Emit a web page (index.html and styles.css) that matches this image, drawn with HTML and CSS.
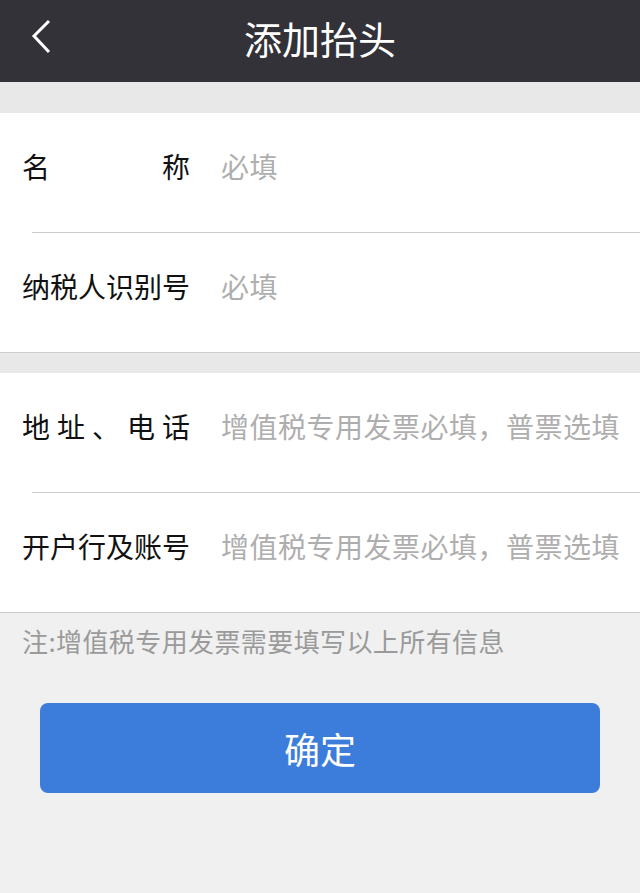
FILE: index.html
```html
<!DOCTYPE html>
<html>
  <head>
    <meta charset="utf-8"/>
    <title>添加抬头</title>
    <link rel="stylesheet" href="styles.css">
  </head>
  <body>

    <div class="topbar">
      <a class="topbar-back" href="#">
        <svg width="24" height="36" viewBox="0 0 24 36">
          <polyline points="19,2 4,17 19,33" fill="none" stroke="#fff" stroke-width="3"/>
        </svg>
      </a>
      <div class="topbar-title">添加抬头</div>
    </div>

    <form class="invoice-form">

      <div class="group">
        <div class="row">
          <label class="row-label justify" for="title-name">名称</label>
          <input id="title-name" class="row-input" type="text" placeholder="必填"/>
        </div>
        <div class="row">
          <label class="row-label" for="title-taxno">纳税人识别号</label>
          <input id="title-taxno" class="row-input" type="text" placeholder="必填"/>
        </div>
      </div>

      <div class="group">
        <div class="row">
          <label class="row-label justify" for="title-addr">地址、电话</label>
          <input id="title-addr" class="row-input" type="text" placeholder="增值税专用发票必填，普票选填"/>
        </div>
        <div class="row">
          <label class="row-label" for="title-bank">开户行及账号</label>
          <input id="title-bank" class="row-input" type="text" placeholder="增值税专用发票必填，普票选填"/>
        </div>
      </div>

      <p class="note">注:增值税专用发票需要填写以上所有信息</p>

      <div class="actions">
        <button class="btn-submit" type="button">确定</button>
      </div>

    </form>

  </body>
</html>
```

FILE: styles.css
```css
/* invoice title page, mobile width 640 */

body
{
margin: 0;
background-color: #F0F0F0;
font-family: "Noto Sans CJK SC", "Noto Sans", sans-serif;
color: #111111;
}

.topbar
{
display: flex;
align-items: center;
justify-content: center;
position: relative;
height: 82px;
background-color: #333238;
}

.topbar-back
{
position: absolute;
left: 30px;
top: 19px;
display: block;
}

.topbar-back svg
{
display: block;
}

.topbar-title
{
font-size: 38px;
line-height: 38px;
color: #FFFFFF;
margin-top: -6px;
}

.invoice-form
{
margin: 0;
padding-top: 31px;
background: linear-gradient(#E8E8E8, #E8E8E8) no-repeat 0 0 / 100% 31px;
}

.group
{
background-color: #FFFFFF;
border-bottom: 1px solid #CCCCCC;
}

.group + .group
{
border-top: 20px solid #E8E8E8;
}

.row
{
display: flex;
align-items: center;
height: 119px;
padding: 0 0 14px 22px;
box-sizing: border-box;
}

.row + .row
{
height: 120px;
border-top: 1px solid #CCCCCC;
margin-left: 32px;
padding-left: 0;
}

.row + .row .row-label
{
margin-left: -10px;
}

.row-label
{
flex: none;
width: 168px;
font-size: 28px;
line-height: 28px;
color: #111111;
}

.row-label.justify
{
text-align: justify;
text-align-last: justify;
}

.row-input
{
flex: 1;
min-width: 0;
margin-left: 31px;
padding: 0;
border: none;
outline: none;
background: transparent;
font-family: "Noto Sans CJK SC", "Noto Sans", sans-serif;
font-size: 28px;
line-height: 28px;
letter-spacing: 0.5px;
color: #111111;
}

.row-input::placeholder
{
color: #AEAEAE;
}

.note
{
margin: 0;
padding: 13px 22px 0;
font-size: 26px;
line-height: 30px;
letter-spacing: 0.4px;
color: #9A9A9A;
}

.actions
{
padding: 47px 40px 100px;
}

.btn-submit
{
display: block;
width: 100%;
height: 90px;
border: none;
border-radius: 8px;
background-color: #3C7CDB;
color: #FFFFFF;
font-family: "Noto Sans CJK SC", "Noto Sans", sans-serif;
font-size: 36px;
}
```
